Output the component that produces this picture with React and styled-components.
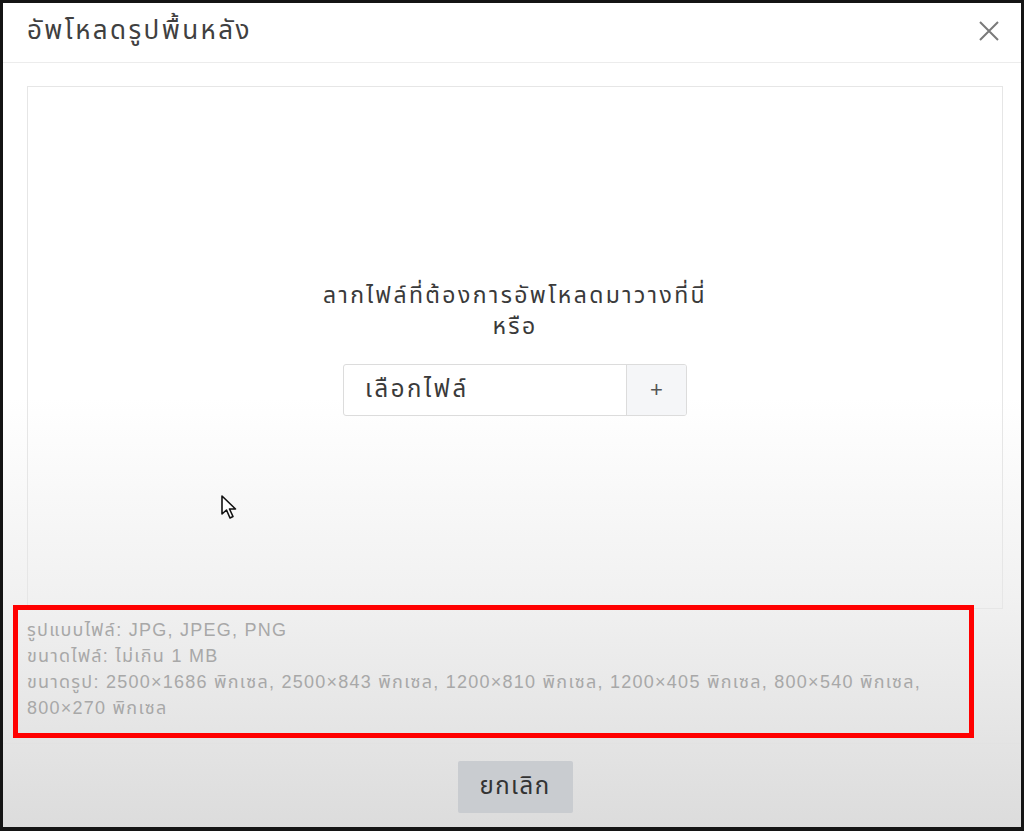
import styled, { createGlobalStyle } from 'styled-components';

const GlobalStyle = createGlobalStyle`
    html, body {
        margin: 0;
        padding: 0;
        background: #111;
    }
    * {
        box-sizing: border-box;
    }
`;

const Frame = styled.div`
    width: 1024px;
    height: 831px;
    border-style: solid;
    border-color: #141414;
    border-width: 3px 3px 4px 3px;
    background: linear-gradient(to bottom, #ffffff 0%, #ffffff 48%, #f1f1f1 72%, #dcdcdc 100%);
    font-family: "Liberation Sans", "Noto Sans Thai", "Noto Sans", sans-serif;
    display: flex;
    flex-direction: column;
    position: relative;
`;

const Header = styled.div`
    height: 60px;
    display: flex;
    align-items: center;
    justify-content: space-between;
    padding: 0 20px 4px 24px;
    border-bottom: 1px solid #ececec;
`;

const Title = styled.h1`
    margin: 0;
    font-size: 26px;
    letter-spacing: 2.4px;
    font-weight: 400;
    color: #404040;
`;

const CloseButton = styled.button`
    border: none;
    background: none;
    padding: 0;
    width: 24px;
    height: 24px;
    display: flex;
    align-items: center;
    justify-content: center;
    cursor: pointer;
`;

const Body = styled.div`
    padding: 23px 18px 0 24px;
`;

const DropZone = styled.div`
    height: 523px;
    border: 1px solid #e6e6e6;
    display: flex;
    flex-direction: column;
    align-items: center;
    justify-content: center;
    position: relative;
`;

const DropText = styled.p`
    margin: 0;
    font-size: 23px;
    letter-spacing: 2.4px;
    line-height: 31px;
    color: #3a3a3a;
    text-align: center;
`;

const InputGroup = styled.div`
    margin-top: 22px;
    width: 344px;
    height: 52px;
    display: flex;
    border: 1px solid #dcdcdc;
    border-radius: 3px;
    overflow: hidden;
    background: #fff;
`;

const FileLabel = styled.div`
    flex: 1;
    display: flex;
    align-items: center;
    padding-left: 21px;
    font-size: 24px;
    letter-spacing: 2.6px;
    color: #3a3a3a;
`;

const AddOn = styled.div`
    width: 60px;
    display: flex;
    align-items: center;
    justify-content: center;
    border-left: 1px solid #dcdcdc;
    background: #f5f6f8;
    font-size: 22px;
    color: #555;
`;

const Pointer = styled.svg`
    position: absolute;
    left: 192px;
    top: 407px;
`;

const Info = styled.div`
    margin-top: 8px;
    position: relative;
    font-size: 18px;
    letter-spacing: 1.25px;
    line-height: 26px;
    color: #a8a8a8;
    padding-right: 30px;
    &::after {
        content: "";
        position: absolute;
        left: -14px;
        top: -12px;
        right: 29px;
        bottom: -17px;
        border: 5px solid #ff0000;
    }
`;

const Footer = styled.div`
    margin-top: auto;
    border-top: 1px solid #e2e2e2;
    height: 84px;
    display: flex;
    align-items: flex-start;
    justify-content: center;
    padding: 17px 0 0 6px;
`;

const CancelButton = styled.button`
    width: 115px;
    height: 52px;
    border: none;
    border-radius: 2px;
    background: #c9ccd0;
    color: #333;
    font-family: inherit;
    font-size: 24px;
    letter-spacing: 1.5px;
    cursor: pointer;
`;

const sizes = ['2500×1686', '2500×843', '1200×810', '1200×405', '800×540', '800×270'];

const App = () => {
    return (
        <>
            <GlobalStyle />
            <Frame>
                <Header>
                    <Title>อัพโหลดรูปพื้นหลัง</Title>
                    <CloseButton aria-label="close">
                        <svg width="22" height="22" viewBox="0 0 22 22">
                            <path d="M2 2 L20 20 M20 2 L2 20" stroke="#7a7a7a" strokeWidth="2" />
                        </svg>
                    </CloseButton>
                </Header>
                <Body>
                    <DropZone>
                        <DropText>
                            ลากไฟล์ที่ต้องการอัพโหลดมาวางที่นี่
                            <br />
                            หรือ
                        </DropText>
                        <InputGroup>
                            <FileLabel>เลือกไฟล์</FileLabel>
                            <AddOn>+</AddOn>
                        </InputGroup>
                        {/* mouse pointer from the capture */}
                        <Pointer width="24" height="28" viewBox="0 0 24 28">
                            <path
                                d="M2 2 L2 20 L6.5 16 L10 24 L13 22.5 L9.5 15 L15.5 15 Z"
                                fill="#fff"
                                stroke="#111"
                                strokeWidth="1.6"
                                strokeLinejoin="round"
                            />
                        </Pointer>
                    </DropZone>
                    <Info>
                        รูปแบบไฟล์: JPG, JPEG, PNG
                        <br />
                        ขนาดไฟล์: ไม่เกิน 1 MB
                        <br />
                        ขนาดรูป: {sizes.map((s) => `${s} พิกเซล`).join(', ')}
                    </Info>
                </Body>
                <Footer>
                    <CancelButton>ยกเลิก</CancelButton>
                </Footer>
            </Frame>
        </>
    );
};

export default App;
